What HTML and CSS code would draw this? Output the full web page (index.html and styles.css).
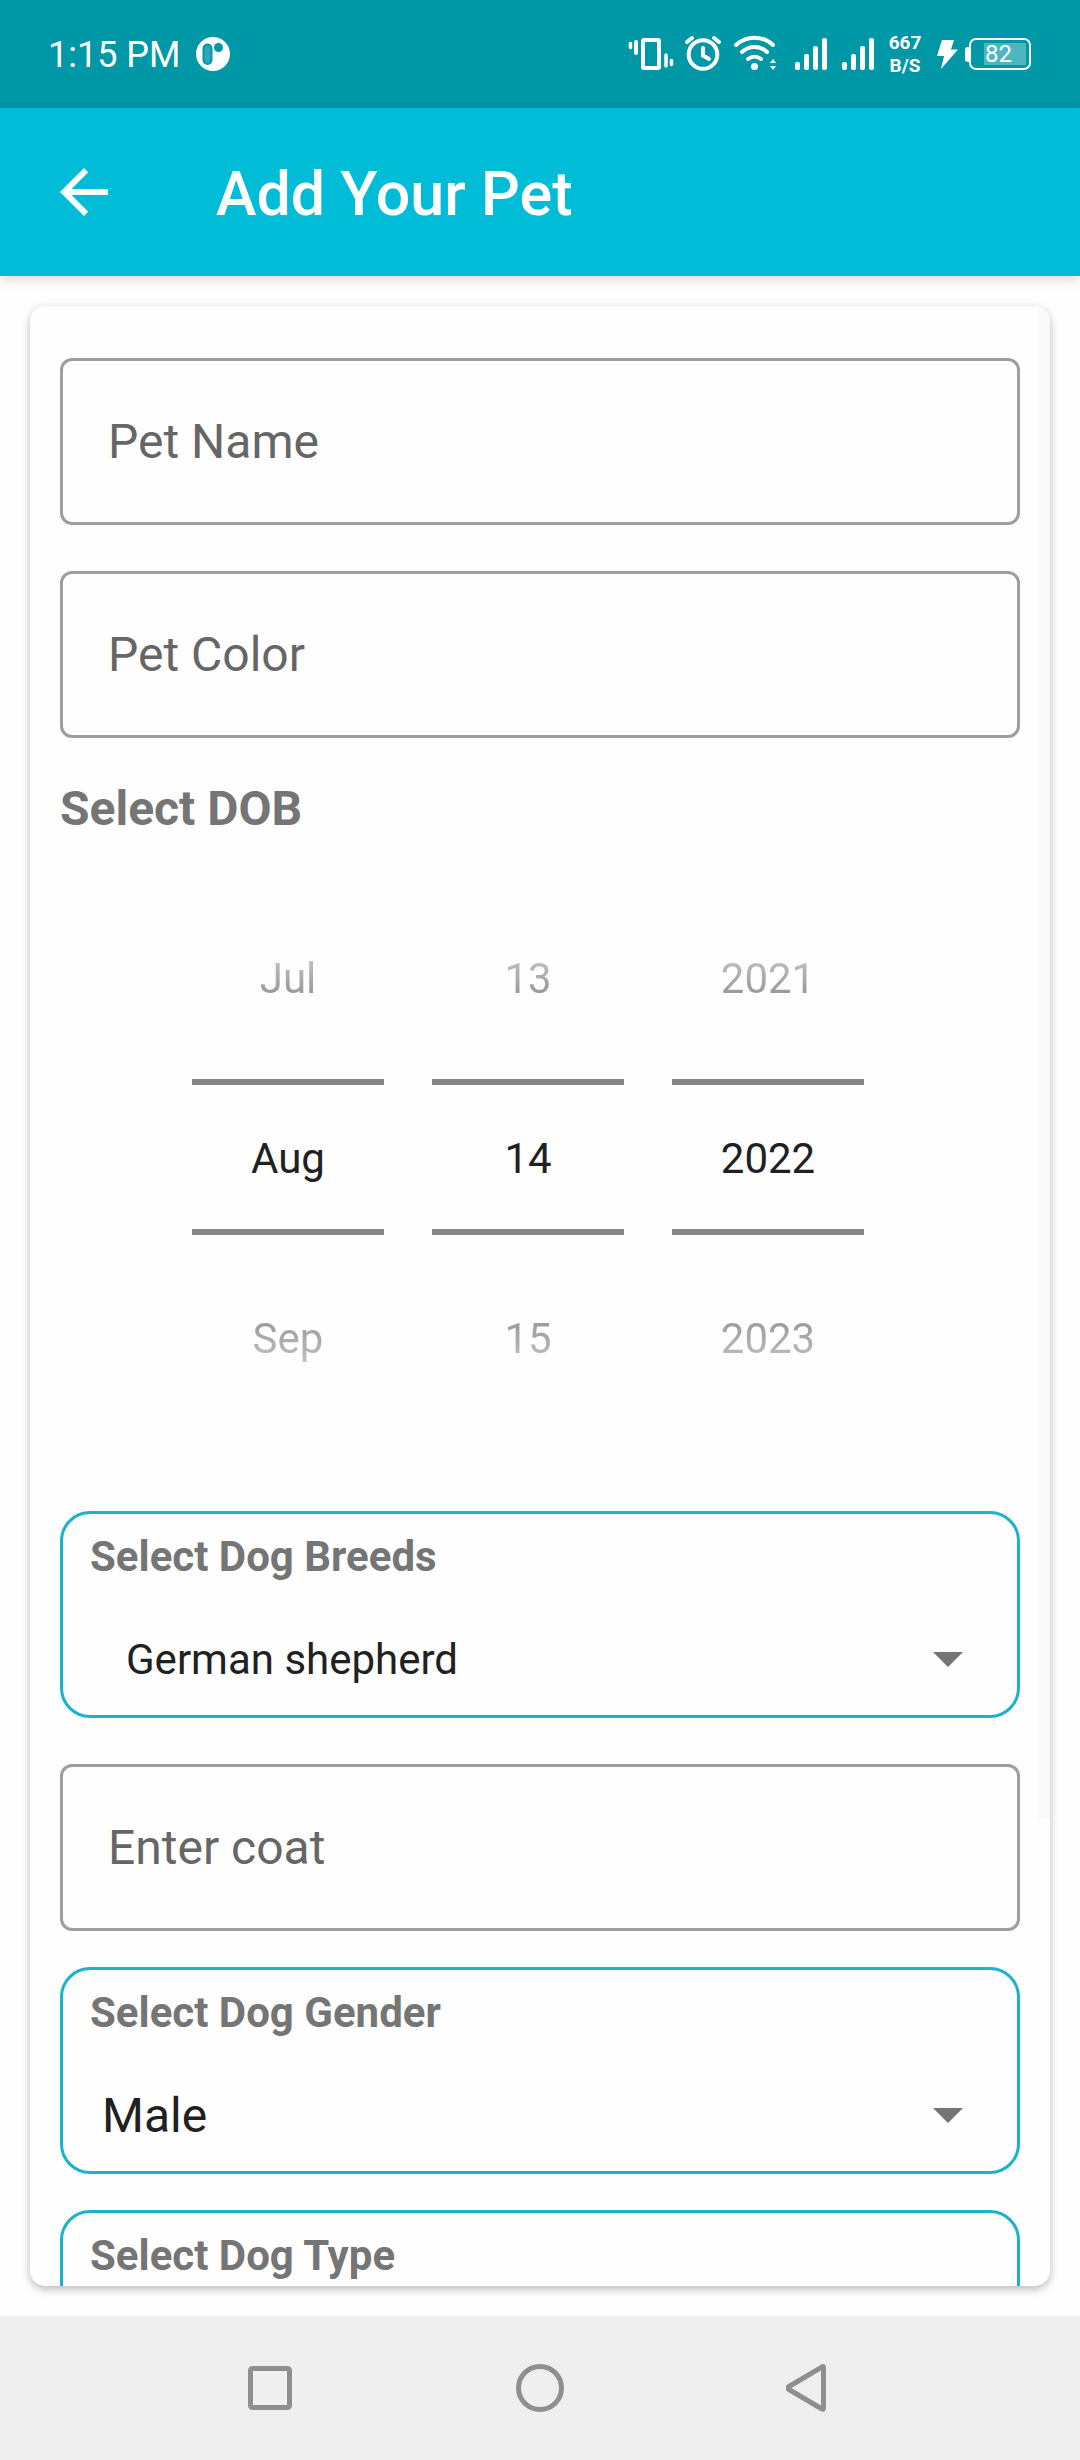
FILE: index.html
```
<!DOCTYPE html>
<html lang="en">
<head>
<meta charset="utf-8">
<meta name="viewport" content="width=device-width">
<title>Add Your Pet</title>
<link rel="stylesheet" href="styles.css">
</head>
<body>
<div class="status-bar">
  <div class="status-left">
    <span class="clock">1:15 PM</span>
    <svg class="app-badge" viewBox="0 0 34 34" width="34" height="34" aria-hidden="true">
      <circle cx="17" cy="17" r="17" fill="#fff"/>
      <rect x="6.500" y="6.500" width="10" height="21.500" rx="5" fill="#0097a7"/>
      <rect x="8.500" y="8.500" width="6" height="17.500" rx="3" fill="#2aa8b5"/>
      <circle cx="22.500" cy="10.500" r="4.500" fill="#0097a7"/>
    </svg>
  </div>
  <div class="status-right">
    <svg viewBox="628 30 51 48" width="51" height="48" aria-hidden="true" stroke="#fff" fill="none" stroke-linecap="round">
      <rect x="643" y="40" width="16" height="28" rx="1" stroke-width="4"/>
      <path d="M630.500 43.500v4M666 55v11M671.500 60.500v4" stroke-width="3.500"/>
      <path d="M636 42v11" stroke-width="4"/>
    </svg>
    <svg viewBox="679 30 49 48" width="49" height="48" aria-hidden="true" stroke="#fff" fill="none" stroke-linecap="round">
      <circle cx="703" cy="54.500" r="14.300" stroke-width="4"/>
      <path d="M703 48v7.500l6 3.500" stroke-width="4"/>
      <path d="M687 42l5-4M714 38l5 4" stroke-width="4"/>
    </svg>
    <svg viewBox="728 30 55 48" width="55" height="48" aria-hidden="true" stroke="#fff" fill="none" stroke-linecap="round">
      <path d="M736 45a27 27 0 0 1 37 0M742 52a18 18 0 0 1 25 0M748 59a10.500 10.500 0 0 1 13 0" stroke-width="4"/>
      <circle cx="754.500" cy="66.500" r="3.500" fill="#fff" stroke="none"/>
      <path d="M770 63l3-4 3 4zM770 66l3 4 3-4z" fill="#fff" stroke="none"/>
    </svg>
    <svg viewBox="783 30 47 48" width="47" height="48" aria-hidden="true" fill="#fff">
      <rect x="795" y="62" width="5" height="8" rx="2"/><rect x="804" y="54" width="5" height="16" rx="2"/><rect x="813" y="46" width="5" height="24" rx="2"/><rect x="822" y="38" width="5" height="32" rx="2"/>
    </svg>
    <svg viewBox="830 30 47 48" width="47" height="48" aria-hidden="true" fill="#fff">
      <rect x="842" y="62" width="5" height="8" rx="2"/><rect x="851" y="54" width="5" height="16" rx="2"/><rect x="860" y="46" width="5" height="24" rx="2"/><rect x="869" y="38" width="5" height="32" rx="2"/>
    </svg>
    <span class="net-speed"><span>667</span><span>B/S</span></span>
    <svg viewBox="930 30 32 48" width="32" height="48" aria-hidden="true" fill="#fff">
      <path d="M942 40h12l-3 9.500h7l-17 19.500 3-13h-7z"/>
    </svg>
    <span class="battery">
      <span class="battery-tip"></span>
      <span class="battery-body"><span class="battery-level">82</span></span>
    </span>
  </div>
</div>

<header class="app-bar">
  <button class="back" type="button" aria-label="Back">
    <svg viewBox="0 0 24 24" width="72" height="72" fill="#fff"><path d="M20 11H7.830l5.590-5.590L12 4l-8 8 8 8 1.410-1.410L7.830 13H20v-2z"/></svg>
  </button>
  <h1 class="title">Add Your Pet</h1>
</header>

<main class="page">
  <form class="card">
    <input class="field" type="text" placeholder="Pet Name" aria-label="Pet Name">
    <input class="field" type="text" placeholder="Pet Color" aria-label="Pet Color">

    <h2 class="section-title">Select DOB</h2>
    <div class="date-picker">
      <div class="wheel">
        <button class="wheel-item prev" type="button">Jul</button>
        <input class="wheel-value" type="text" value="Aug" aria-label="Month">
        <button class="wheel-item next" type="button">Sep</button>
      </div>
      <div class="wheel">
        <button class="wheel-item prev" type="button">13</button>
        <input class="wheel-value" type="text" value="14" aria-label="Day">
        <button class="wheel-item next" type="button">15</button>
      </div>
      <div class="wheel">
        <button class="wheel-item prev" type="button">2021</button>
        <input class="wheel-value" type="text" value="2022" aria-label="Year">
        <button class="wheel-item next" type="button">2023</button>
      </div>
    </div>

    <div class="select-box">
      <label class="select-label" for="breed">Select Dog Breeds</label>
      <div class="select-row">
        <select class="select select-inset" id="breed"><option>German shepherd</option></select>
        <svg class="caret" viewBox="0 0 30 15" width="30" height="15" aria-hidden="true"><path d="M0 0h30L15 15z" fill="#757575"/></svg>
      </div>
    </div>

    <input class="field field-coat" type="text" placeholder="Enter coat" aria-label="Enter coat">

    <div class="select-box">
      <label class="select-label" for="gender">Select Dog Gender</label>
      <div class="select-row">
        <select class="select select-large" id="gender"><option>Male</option><option>Female</option></select>
        <svg class="caret" viewBox="0 0 30 15" width="30" height="15" aria-hidden="true"><path d="M0 0h30L15 15z" fill="#757575"/></svg>
      </div>
    </div>

    <div class="select-box">
      <label class="select-label" for="type">Select Dog Type</label>
      <div class="select-row">
        <select class="select select-large" id="type"></select>
        <svg class="caret" viewBox="0 0 30 15" width="30" height="15" aria-hidden="true"><path d="M0 0h30L15 15z" fill="#757575"/></svg>
      </div>
    </div>
    <div class="scroll-thumb"></div>
  </form>
</main>

<nav class="nav-bar">
  <button class="nav-button" type="button" aria-label="Recent apps">
    <svg viewBox="0 0 48 48" width="48" height="48"><rect x="4.500" y="4.500" width="39" height="39" rx="2"/></svg>
  </button>
  <button class="nav-button" type="button" aria-label="Home">
    <svg viewBox="0 0 48 48" width="48" height="48"><circle cx="24" cy="24" r="21.500"/></svg>
  </button>
  <button class="nav-button" type="button" aria-label="Back">
    <svg viewBox="0 0 48 48" width="48" height="48"><path d="M36.200 2.800Q37.500 2 37.500 4v40Q37.500 46 36 45L3 25.500Q0.500 24 3 22.500z" stroke-linejoin="round"/></svg>
  </button>
</nav>
</body>
</html>
```
FILE: styles.css
```
* {
  box-sizing: border-box;
}

body {
  margin: 0;
  height: 100vh;
  display: flex;
  flex-direction: column;
  background: #fefefe;
  color: #212121;
  font-family: Roboto, "Liberation Sans", sans-serif;
}

button,
input,
select {
  font-family: inherit;
  margin: 0;
  border: 0;
  background: none;
  border-radius: 0;
  outline: 0;
}

svg {
  display: block;
  flex: none;
}

/* Status bar */
.status-bar {
  flex: none;
  height: 108px;
  padding: 0 49px 0 48px;
  display: flex;
  align-items: center;
  justify-content: space-between;
  background: #0097a7;
  color: #fff;
}

.status-left,
.status-right {
  display: flex;
  align-items: center;
}

.status-left {
  gap: 15px;
}

.clock {
  padding-top: 2px;
  font-size: 36px;
  line-height: 44px;
}

.net-speed {
  width: 53px;
  padding-left: 3px;
  display: flex;
  flex-direction: column;
  align-items: center;
  font-size: 19px;
  line-height: 23px;
  font-weight: 700;
}

.battery {
  display: flex;
  align-items: center;
  padding-left: 3px;
}

.battery-tip {
  width: 4px;
  height: 15px;
  border-radius: 3px 0 0 3px;
  background: #fff;
}

.battery-body {
  width: 62px;
  height: 32px;
  padding: 3px 3px 3px 13px;
  border: 2px solid #fff;
  border-radius: 7px;
}

.battery-level {
  display: block;
  height: 22px;
  padding-left: 1px;
  background: #4db6c1;
  font-size: 24px;
  line-height: 22px;
}

/* App bar */
.app-bar {
  flex: none;
  height: 168px;
  padding: 0 48px;
  display: flex;
  align-items: center;
  gap: 96px;
  background: #00bcd7;
  color: #fff;
  box-shadow: 0 3px 12px rgba(0, 0, 0, 0.16);
}

.back {
  padding: 0;
}

.title {
  margin: 0;
  padding-top: 4px;
  font-size: 61px;
  line-height: 72px;
  font-weight: 500;
}

/* Form card */
.page {
  flex: 1;
  min-height: 0;
  padding: 30px;
  display: flex;
}

.card {
  position: relative;
  flex: 1;
  min-width: 0;
  padding: 52px 30px 0;
  display: flex;
  flex-direction: column;
  overflow: hidden;
  background: #fefefe;
  border-radius: 15px;
  box-shadow: 0 3px 8px rgba(0, 0, 0, 0.28);
}

.card > * {
  flex: none;
}

.field {
  width: 100%;
  height: 167px;
  margin-bottom: 46px;
  padding: 0 45px;
  border: 3px solid #9e9e9e;
  border-radius: 12px;
  font-size: 48px;
  color: #212121;
}

.field::placeholder {
  color: #666;
  opacity: 1;
}

.field-coat {
  margin-bottom: 36px;
}

.section-title {
  margin: -3px 0 50px;
  font-size: 48px;
  line-height: 56px;
  font-weight: 700;
  color: #757575;
}

.date-picker {
  display: flex;
  justify-content: center;
  gap: 48px;
  margin-bottom: 84px;
  padding-right: 24px;
}

.wheel {
  width: 192px;
  display: flex;
  flex-direction: column;
  gap: 12px;
}

.wheel-item {
  height: 180px;
  padding: 2px 0 0;
  font-size: 42px;
  color: transparent;
  -webkit-background-clip: text;
  background-clip: text;
}

.prev {
  background-image: linear-gradient(#fefefe, #c0c0c0 40%, #989898 60%, #777);
}

.next {
  background-image: linear-gradient(#777, #989898 40%, #bababa 60%, #fefefe);
}

.wheel-value {
  width: 100%;
  height: 156px;
  padding: 2px 0 0;
  border-top: 6px solid #868686;
  border-bottom: 6px solid #868686;
  text-align: center;
  font-size: 42px;
  color: #212121;
}

/* Outlined drop-downs */
.select-box {
  margin-bottom: 46px;
  padding: 18px 0 0 27px;
  border: 3px solid #1ab3ca;
  border-radius: 30px;
  display: flex;
  flex-direction: column;
  gap: 22px;
}

.select-label {
  font-size: 42px;
  line-height: 49px;
  font-weight: 700;
  color: #757575;
}

.select-row {
  height: 112px;
  padding-right: 54px;
  display: flex;
  align-items: center;
}

.select {
  flex: 1;
  min-width: 0;
  height: 100%;
  appearance: none;
  font-size: 42px;
  color: #212121;
}

.select-inset {
  padding: 0 0 0 36px;
}

.select-large {
  padding: 0 0 0 12px;
  font-size: 48px;
}

.field-coat + .select-box {
  margin-bottom: 36px;
}

/* Scroll indicator over the card's right edge */
.scroll-thumb {
  position: absolute;
  top: 0;
  right: 0;
  width: 12px;
  height: 1513px;
  background: #fafafa;
}

/* System navigation */
.nav-bar {
  flex: none;
  height: 144px;
  display: flex;
  justify-content: center;
  background: #efefef;
}

.nav-button {
  width: 25%;
  padding: 0;
  display: flex;
  align-items: center;
  justify-content: center;
}

.nav-button svg {
  fill: none;
  stroke: #8f8f8f;
  stroke-width: 5;
}
```
